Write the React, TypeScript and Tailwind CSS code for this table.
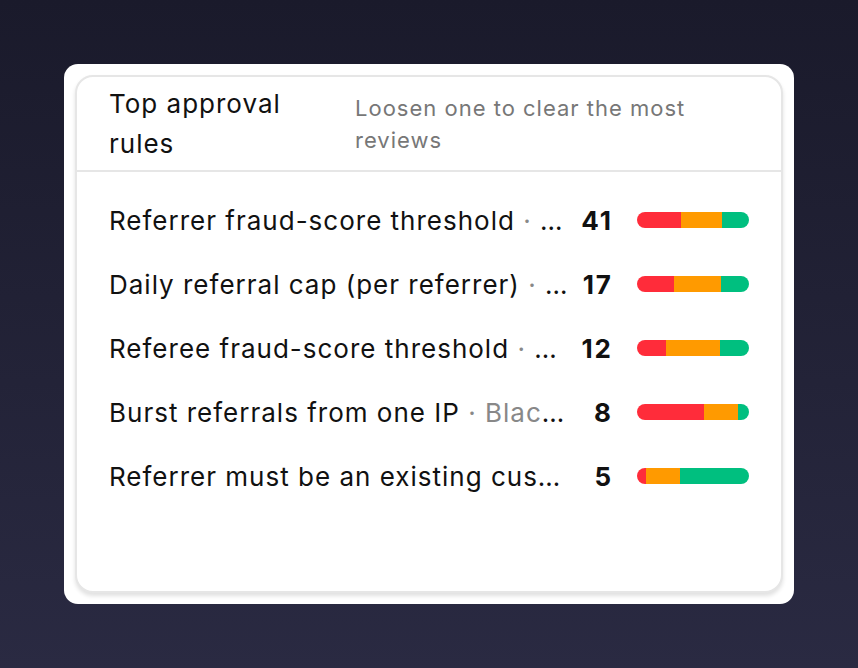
const rules = [
  { name: "Referrer fraud-score threshold", tag: "Fraud score", count: 41, split: [44, 41, 27] },
  { name: "Daily referral cap (per referrer)", tag: "Velocity", count: 17, split: [37, 47, 28] },
  { name: "Referee fraud-score threshold", tag: "Fraud score", count: 12, split: [29, 54, 29] },
  { name: "Burst referrals from one IP", tag: "Blacklist", count: 8, split: [67, 34, 11] },
  { name: "Referrer must be an existing customer", tag: "Eligibility", count: 5, split: [9, 34, 69] },
];

const App = () => {
  return (
    <div
      className="h-screen w-full p-16 bg-gradient-to-b from-[#1a1a2b] to-[#2a2a42]"
      style={{ fontFamily: "Inter, 'Liberation Sans', sans-serif" }}
    >
      {/* outer white frame */}
      <div className="h-full w-full rounded-[14px] bg-white p-[11px]">
        <div className="flex h-full flex-col rounded-[18px] border-2 border-[#e6e6e6] bg-white shadow-[0_3px_4px_rgba(0,0,0,0.12)]">
          {/* header */}
          <div className="flex items-center gap-6 border-b-2 border-[#e6e6e6] px-8 pt-[7px] pb-[6px]">
            <h2 className="w-[222px] shrink-0 text-[26px] leading-[40px] tracking-[1px] text-[#111]">
              Top approval rules
            </h2>
            <p className="flex-1 text-[22px] leading-[32px] tracking-[1px] text-[#777]">
              Loosen one to clear the most reviews
            </p>
          </div>

          {/* rows */}
          <div className="flex flex-col px-8 pt-4">
            {rules.map((r) => (
              <div key={r.name} className="flex h-16 items-center">
                <div className="mr-2 min-w-0 flex-1 truncate text-[26px] tracking-[1px] text-[#111]">
                  {r.name} <span className="text-[#888]">· {r.tag}</span>
                </div>
                <div className="w-[37px] text-right text-[26px] font-bold tracking-[2px] text-[#111]">
                  {r.count}
                </div>
                <div className="ml-6 flex h-4 w-[112px] overflow-hidden rounded-full">
                  <div className="h-full bg-[#ff2c3a]" style={{ width: r.split[0] }} />
                  <div className="h-full bg-[#ff9a00]" style={{ width: r.split[1] }} />
                  <div className="h-full bg-[#00bf7f]" style={{ width: r.split[2] }} />
                </div>
              </div>
            ))}
          </div>
        </div>
      </div>
    </div>
  );
};

export default App;
